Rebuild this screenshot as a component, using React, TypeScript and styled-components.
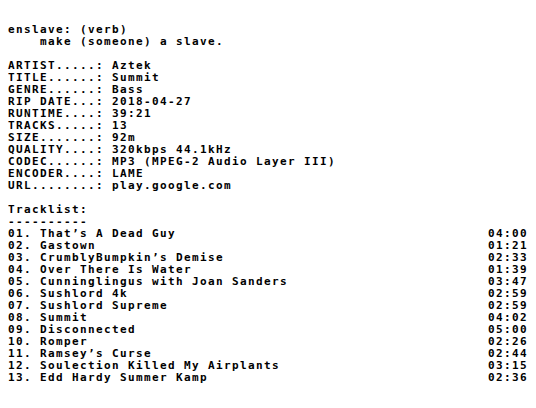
import React from "react";
import styled, { createGlobalStyle } from "styled-components";

const CHAR = 8;
const LINE = 12;
const FONT = 11;

const GlobalStyle = createGlobalStyle`
  html, body { margin: 0; padding: 0; background: #ffffff; }
  body {
    color: #000000;
    font-family: "DejaVu Sans Mono", "Liberation Mono", monospace;
    font-weight: bold;
    font-size: ${FONT}px;
    letter-spacing: ${CHAR - FONT * 0.602}px;
    line-height: ${LINE}px;
  }
`;

const Page = styled.main`
  display: flex;
  flex-direction: column;
  gap: ${LINE}px;
  padding: 24px 8px 0 8px;
  width: ${65 * CHAR}px;
`;

const Section = styled.section`
  display: flex;
  flex-direction: column;
`;

const Line = styled.div<{ $indent?: number }>`
  white-space: pre;
  height: ${LINE}px;
  padding-left: ${(p) => (p.$indent ?? 0) * CHAR}px;
`;

const InfoRow = styled.div`
  display: flex;
  white-space: pre;
  height: ${LINE}px;
`;

const Label = styled.span`
  width: ${13 * CHAR}px;
  flex: none;
`;

const Value = styled.span``;

const TrackRow = styled.div`
  display: flex;
  white-space: pre;
  height: ${LINE}px;
`;

const TrackNo = styled.span`
  width: ${4 * CHAR}px;
  flex: none;
`;

const TrackTitle = styled.span`
  flex: 1;
`;

const Duration = styled.span`
  flex: none;
  width: ${5 * CHAR}px;
`;

const info: [string, string][] = [
  ["ARTIST", "Aztek"],
  ["TITLE", "Summit"],
  ["GENRE", "Bass"],
  ["RIP DATE", "2018-04-27"],
  ["RUNTIME", "39:21"],
  ["TRACKS", "13"],
  ["SIZE", "92m"],
  ["QUALITY", "320kbps 44.1kHz"],
  ["CODEC", "MP3 (MPEG-2 Audio Layer III)"],
  ["ENCODER", "LAME"],
  ["URL", "play.google.com"],
];

const tracks: [string, string][] = [
  ["That’s A Dead Guy", "04:00"],
  ["Gastown", "01:21"],
  ["CrumblyBumpkin’s Demise", "02:33"],
  ["Over There Is Water", "01:39"],
  ["Cunninglingus with Joan Sanders", "03:47"],
  ["Sushlord 4k", "02:59"],
  ["Sushlord Supreme", "02:59"],
  ["Summit", "04:02"],
  ["Disconnected", "05:00"],
  ["Romper", "02:26"],
  ["Ramsey’s Curse", "02:44"],
  ["Soulection Killed My Airplants", "03:15"],
  ["Edd Hardy Summer Kamp", "02:36"],
];

export default function App() {
  return (
    <>
      <GlobalStyle />
      <Page>
        <Section>
          <Line>enslave: (verb)</Line>
          <Line $indent={4}>make (someone) a slave.</Line>
        </Section>
        <Section>
          {info.map(([k, v]) => (
            <InfoRow key={k}>
              <Label>{k.padEnd(11, ".") + ":"}</Label>
              <Value>{v}</Value>
            </InfoRow>
          ))}
        </Section>
        <Section>
          <Line>Tracklist:</Line>
          <Line>----------</Line>
          {tracks.map(([t, d], i) => (
            <TrackRow key={t}>
              <TrackNo>{String(i + 1).padStart(2, "0") + "."}</TrackNo>
              <TrackTitle>{t}</TrackTitle>
              <Duration>{d}</Duration>
            </TrackRow>
          ))}
        </Section>
      </Page>
    </>
  );
}
